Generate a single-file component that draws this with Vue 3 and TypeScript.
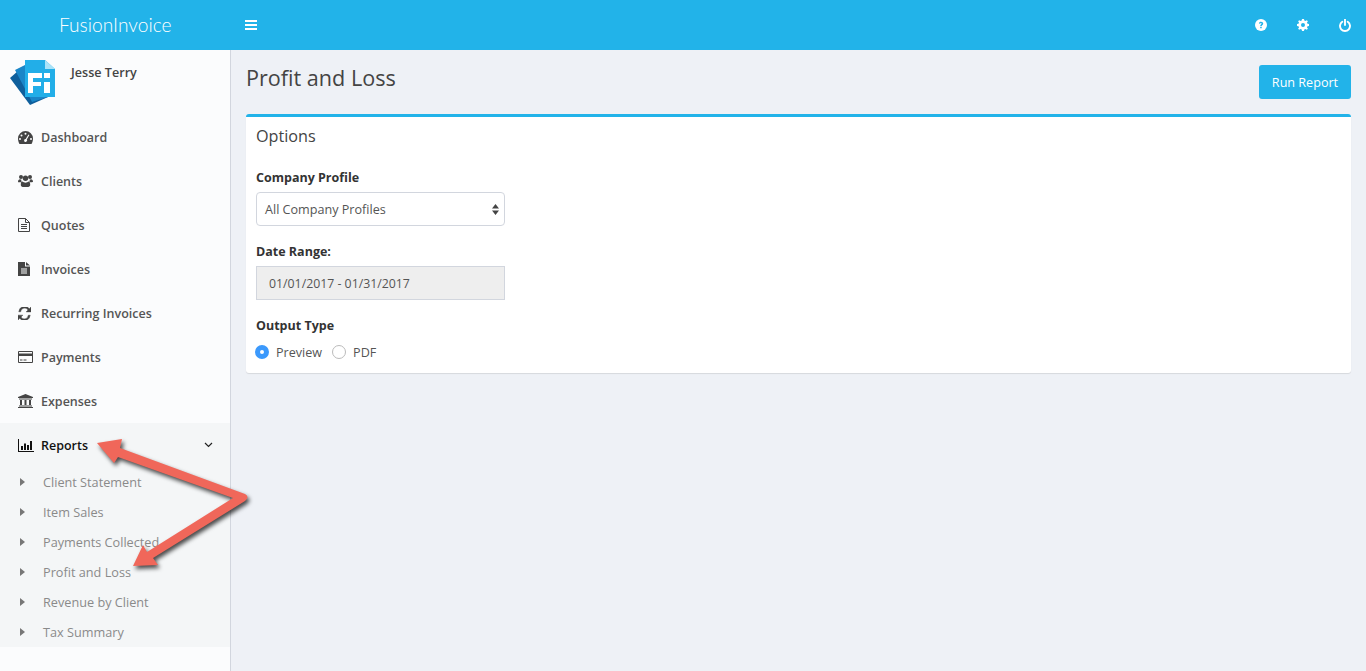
<script setup lang="ts">
const items = [
  { label: 'Dashboard', icon: 'dash' },
  { label: 'Clients', icon: 'users' },
  { label: 'Quotes', icon: 'quote' },
  { label: 'Invoices', icon: 'invoice' },
  { label: 'Recurring Invoices', icon: 'refresh' },
  { label: 'Payments', icon: 'card' },
  { label: 'Expenses', icon: 'bank' },
]
const subs = ['Client Statement', 'Item Sales', 'Payments Collected', 'Profit and Loss', 'Revenue by Client', 'Tax Summary']
</script>

<template>
  <div class="page">
    <header class="topbar">
      <div class="brand">FusionInvoice</div>
      <svg class="burger" width="12" height="12" viewBox="0 0 12 12"><path d="M0 1h12v2H0zM0 5h12v2H0zM0 9h12v2H0z" fill="#fff"/></svg>
      <div class="top-icons">
        <svg width="12" height="12" viewBox="0 0 12 12"><circle cx="6" cy="6" r="6" fill="#fff"/><path d="M3.900 4.600C4 3.400 4.900 2.800 6 2.800c1.200 0 2.200.7 2.200 1.800 0 1.600-1.500 1.400-1.500 2.600H5.200c0-1.900 1.400-1.800 1.400-2.600 0-.4-.3-.6-.7-.6-.4 0-.7.3-.8.7zM5.200 7.900h1.500v1.400H5.200z" fill="#22b3e9"/></svg>
        <svg width="12" height="12" viewBox="0 0 12 12"><path fill-rule="evenodd" fill="#fff" d="M5 0h2l.3 1.600 1.100.5L9.800 1.200l1.100 1.100L10 3.600l.5 1.100L12 5v2l-1.500.3-.5 1.100.9 1.300-1.100 1.100-1.400-.9-1.100.5L7 12H5l-.3-1.600-1.100-.5-1.400.9L1.100 9.700 2 8.400l-.5-1.100L0 7V5l1.500-.3.500-1.100-.9-1.300L2.200 1.200l1.400.9 1.100-.5zM6 4a2 2 0 1 0 0 4 2 2 0 0 0 0-4z"/></svg>
        <svg width="12" height="13" viewBox="0 0 12 13"><path d="M3.300 2.800a5 5 0 1 0 5.400 0M6 .5v5.500" fill="none" stroke="#fff" stroke-width="1.900" stroke-linecap="round"/></svg>
      </div>
    </header>
    <div class="body">
      <aside class="sidebar">
        <div class="user">
          <svg class="logo" width="46" height="46" viewBox="0 0 46 46">
            <path d="M0 19 L8 12 L38 38 L20 46 Z" fill="#0f5f9c"/>
            <path d="M5 11 L15 6 L38 38 L22 43 Z" fill="#1a86c8"/>
            <path d="M15 1 H35 L45 10 V38 H15 Z" fill="#22aee8"/>
            <path d="M35 1 L45 10 H35 Z" fill="#a9e3f9"/>
            <path d="M18 14 H32 V19 H23 V23 H31 V27 H23 V34 H18 Z" fill="#fff"/>
            <path d="M34 14 H40 V19 H34 Z M34 23 H40 V34 H34 Z" fill="#fff"/>
          </svg>
          <span class="username">Jesse Terry</span>
        </div>
        <nav class="nav">
          <a v-for="i in items" :key="i.label" class="item">
            <span class="ico">
              <svg v-if="i.icon === 'dash'" width="15" height="13" viewBox="0 0 15 13"><path fill-rule="evenodd" fill="#444" d="M7.500 0A7.500 7.500 0 0 0 0 7.500c0 2 .5 3.800 1.500 5.500h12c1-1.700 1.500-3.500 1.500-5.500A7.500 7.500 0 0 0 7.500 0zM7.500 1.800a1 1 0 1 1 0 2 1 1 0 0 1 0-2zM3.500 3.500a1 1 0 1 1 0 2 1 1 0 0 1 0-2zM2 7a1 1 0 1 1 0 2 1 1 0 0 1 0-2zM13 7a1 1 0 1 1 0 2 1 1 0 0 1 0-2zM10.500 3.500l.9.500L8.800 8.500a1.500 1.500 0 1 1-1.100-.6z"/></svg>
              <svg v-else-if="i.icon === 'users'" width="15" height="14" viewBox="0 0 15 14" fill="#444"><circle cx="3" cy="3" r="2"/><circle cx="12" cy="3" r="2"/><circle cx="7.500" cy="4.300" r="2.700"/><path d="M0 8c0-2 .8-2.800 2-2.800.4 0 .8.500 1.400.6-.3.700-.2 1.600.3 2.400H1C.4 8.200 0 8.200 0 8zM15 8c0-2-.8-2.800-2-2.800-.4 0-.8.500-1.400.6.300.7.2 1.600-.3 2.400H14c.6 0 1-.2 1-.2zM4.500 7.500c.8.700 1.800 1.200 3 1.200s2.200-.5 3-1.200c1.300.2 1.700 1.500 1.700 3.300 0 1.300-.8 2.200-2 2.200H4.800c-1.200 0-2-.9-2-2.200 0-1.800.4-3.100 1.700-3.300z"/></svg>
              <svg v-else-if="i.icon === 'quote'" width="12" height="14" viewBox="0 0 12 14"><path d="M.5.5h7l4 4v9H.5zM7.500.5v4h4M3 6.500h6M3 8.500h6M3 10.500h6" fill="none" stroke="#444" stroke-width="1"/></svg>
              <svg v-else-if="i.icon === 'invoice'" width="12" height="14" viewBox="0 0 12 14"><path fill-rule="evenodd" fill="#444" d="M0 0h7v4.500h5V14H0zM3 6.500v1h6v-1zM3 8.500v1h6v-1zM3 10.500v1h6v-1zM8 0l4 3.500H8z"/></svg>
              <svg v-else-if="i.icon === 'refresh'" width="13" height="13" viewBox="0 0 12 12" fill="#444" stroke="#444" stroke-width="0.4"><path d="M12 0v4.500H7.500L9.200 2.800A3.600 3.600 0 0 0 2.500 4.400H.7A5.400 5.400 0 0 1 10.400 1.600zM0 12V7.500h4.500L2.800 9.200A3.600 3.600 0 0 0 9.500 7.600h1.800A5.400 5.400 0 0 1 1.600 10.400z"/></svg>
              <svg v-else-if="i.icon === 'card'" width="15" height="12" viewBox="0 0 15 12"><path fill-rule="evenodd" fill="#444" d="M1 0h13a1 1 0 0 1 1 1v10a1 1 0 0 1-1 1H1a1 1 0 0 1-1-1V1a1 1 0 0 1 1-1zM1 5v6h13V5zM1 1v1.500h13V1zM2 8.500h2.500v1H2zM5.500 8.500h3v1h-3z"/></svg>
              <svg v-else-if="i.icon === 'bank'" width="15" height="14" viewBox="0 0 15 14" fill="#444"><path d="M7.500 0L15 3v1H0V3zM1 4.500h13V5.500H1zM2 6h2v5H2zM6.500 6h2v5h-2zM11 6h2v5h-2zM1 11.500h13v1H1zM0 13h15v1H0z"/></svg>
            </span>
            <span>{{ i.label }}</span>
          </a>
          <a class="item active">
            <span class="ico"><svg width="16" height="13" viewBox="0 0 16 13" fill="#111"><path d="M0 0h1v12h15v1H0zM3 7h2v4H3zM6 4.500h2V11H6zM9 6h2v5H9zM12 2h2v9h-2z"/></svg></span>
            <span>Reports</span>
            <svg class="chev" width="9" height="6" viewBox="0 0 9 6"><path d="M1 1l3.500 3.500L8 1" fill="none" stroke="#222" stroke-width="1.200"/></svg>
          </a>
          <div class="subs">
            <a v-for="s in subs" :key="s" class="sub">
              <svg width="5" height="8" viewBox="0 0 5 8"><path d="M0 0l5 4-5 4z" fill="#777"/></svg>
              <span>{{ s }}</span>
            </a>
          </div>
        </nav>
      </aside>
      <main class="main">
        <div class="head">
          <h1>Profit and Loss</h1>
          <button class="btn">Run Report</button>
        </div>
        <section class="card">
          <h3>Options</h3>
          <div class="field">
            <label>Company Profile</label>
            <div class="select">
              <span>All Company Profiles</span>
              <svg width="7" height="11" viewBox="0 0 7 11"><path d="M3.500 0L7 4.500H0zM3.500 11L0 6.500h7z" fill="#444"/></svg>
            </div>
          </div>
          <div class="field">
            <label>Date Range:</label>
            <div class="input">01/01/2017 - 01/31/2017</div>
          </div>
          <div class="field last">
            <label>Output Type</label>
            <div class="radios">
              <span class="radio on"></span><span class="rl">Preview</span>
              <span class="radio"></span><span class="rl">PDF</span>
            </div>
          </div>
        </section>
      </main>
    </div>
    <svg class="arrows" width="300" height="671" viewBox="0 0 300 671">
      <path fill="#f0675a" d="M97 443L122 439L120 448L245 494Q250 497 245 501L153 558L158 565L133 566L143 545L147 552L233 498L118 457L114 463Z"/>
    </svg>
  </div>
</template>

<style>
html, body { margin: 0; padding: 0; overflow: hidden; }
</style>

<style scoped>
.page {
  position: relative;
  width: 1366px;
  height: 671px;
  overflow: hidden;
  font-family: "Open Sans", "Noto Sans", sans-serif;
  font-size: 12.600px;
  color: #444;
  background: #eef1f6;
}
.topbar {
  height: 50px;
  background: #22b3e9;
  display: flex;
  align-items: center;
  color: #fff;
}
.brand {
  width: 245px;
  box-sizing: border-box;
  padding: 0 0 2px 59px;
  font-family: "Lato", sans-serif;
  font-weight: 300;
  font-size: 19.200px;
}
.burger { display: block; }
.top-icons {
  margin-left: auto;
  display: flex;
  align-items: center;
  gap: 30px;
  padding-right: 15px;
}
.body { display: flex; height: 621px; }
.sidebar {
  width: 231px;
  box-sizing: border-box;
  flex: none;
  background: #fbfcfd;
  border-right: 1px solid #d2d6de;
}
.user {
  display: flex;
  height: 65px;
  padding: 9px 0 0 10px;
  box-sizing: border-box;
}
.logo { flex: none; }
.username {
  margin-left: 15px;
  font-weight: 600;
  line-height: 28px;
}
.item {
  height: 44px;
  display: flex;
  align-items: center;
  padding-left: 18px;
  font-weight: 600;
  color: #555;
  font-size: 12.500px;
}
.ico {
  width: 23px;
  flex: none;
  display: flex;
  align-items: center;
}
.active { background: #f4f6f7; color: #111; position: relative; }
.chev { margin-left: auto; margin-right: 17px; }
.subs { background: #f4f6f7; height: 180px; }
.sub {
  height: 30px;
  display: flex;
  align-items: center;
  padding-left: 20px;
  color: #8a8a8a;
  gap: 18px;
  font-size: 12.700px;
}
.main { flex: 1; padding: 15px 15px 0; min-width: 0; }
.head {
  display: flex;
  justify-content: space-between;
  align-items: center;
  height: 34px;
  margin-bottom: 15px;
}
h1 { margin: 0 0 10px; font-size: 21.600px; font-weight: 400; color: #444; }
.btn {
  width: 92px;
  height: 34px;
  background: #22b3e9;
  color: #fff;
  border: 0;
  border-radius: 3px;
  font: inherit;
}
.card {
  background: #fff;
  border-top: 3px solid #22b3e9;
  border-radius: 3px;
  box-shadow: 0 1px 1px rgba(0, 0, 0, 0.1);
  height: 259px;
  box-sizing: border-box;
  padding: 0 10px;
}
h3 { margin: 0; padding-top: 9px; font-size: 16.200px; font-weight: 400; line-height: 20px; height: 41px; }
.field { height: 74px; width: 249px; }
label { display: block; font-weight: 700; line-height: 20px; padding-top: 1px; margin-bottom: 4px; color: #333; font-size: 12.500px; }
.select, .input {
  height: 34px;
  box-sizing: border-box;
  border: 1px solid #d2d6de;
  display: flex;
  align-items: center;
  color: #555;
}
.select {
  border-radius: 4px;
  justify-content: space-between;
  padding: 0 5px 0 8px;
}
.input { background: #eee; padding-left: 12px; font-size: 12.300px; }
.radios { display: flex; align-items: center; height: 24px; }
.radio {
  width: 12px;
  height: 12px;
  border: 1px solid #bbb;
  border-radius: 50%;
  background: #fff;
  margin-left: 10px;
}
.radio.on {
  width: 4px;
  height: 4px;
  border: 5px solid #3b99fc;
  background: #fff;
  margin-left: -1px;
}
.rl { margin-left: 7px; color: #555; }
.arrows {
  position: absolute;
  left: 0;
  top: 0;
  pointer-events: none;
  filter: drop-shadow(2px 3px 2px rgba(0, 0, 0, 0.7));
}
</style>
